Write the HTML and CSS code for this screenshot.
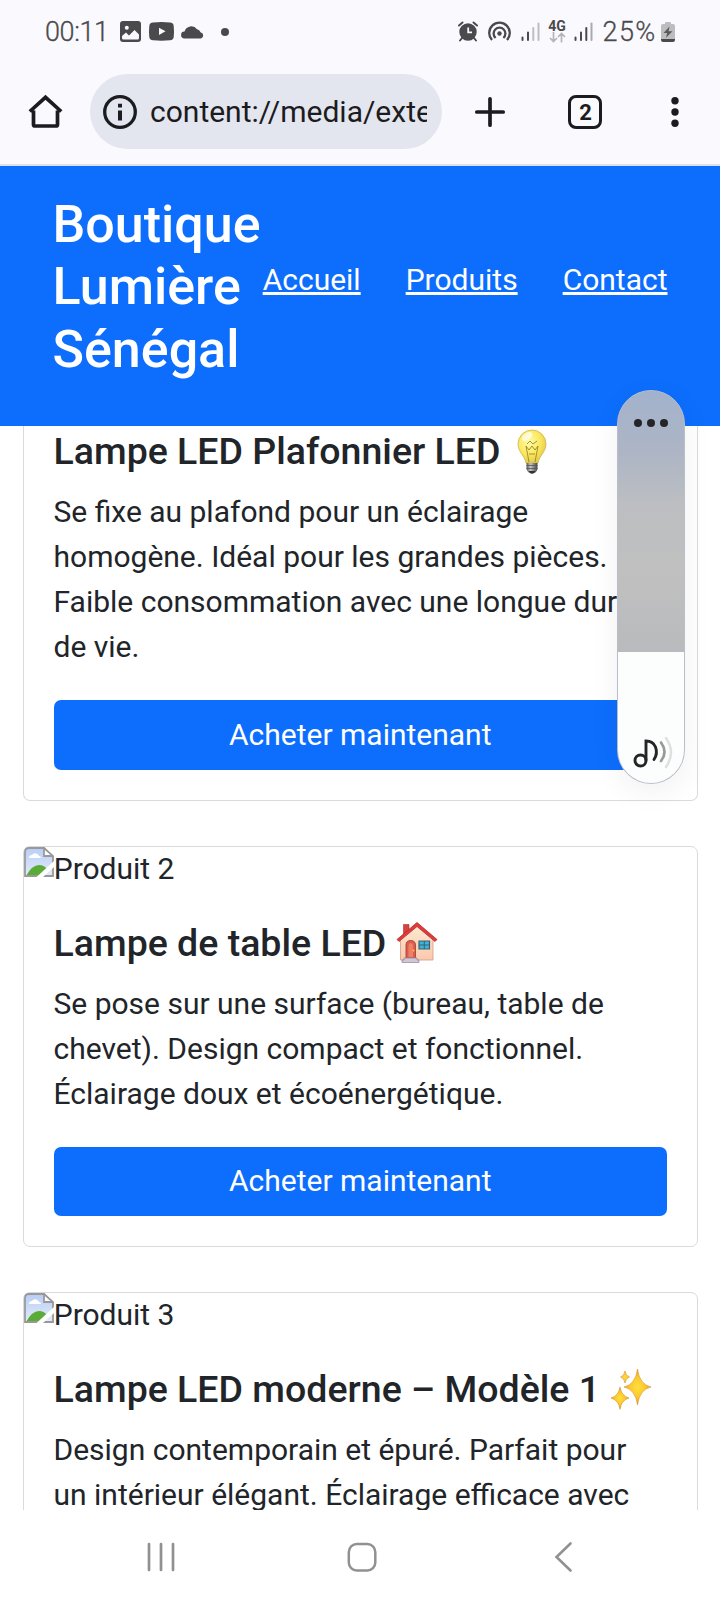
FILE: index.html
```html
<!DOCTYPE html>
<html lang="fr">
<head>
<meta charset="utf-8">
<title>Boutique Lumière Sénégal</title>
<link rel="stylesheet" href="styles.css">
</head>
<body>
<svg width="0" height="0" class="defs">
  <defs>
    <radialGradient id="glass" cx=".4" cy=".35" r=".65"><stop offset="0" stop-color="#fffba8"/><stop offset=".6" stop-color="#fbe860"/><stop offset="1" stop-color="#e6cb4a"/></radialGradient>
    <linearGradient id="metal"><stop offset="0" stop-color="#555"/><stop offset=".35" stop-color="#c4c4c4"/><stop offset="1" stop-color="#444"/></linearGradient>
    <linearGradient id="wall" x2="0" y2="1"><stop offset="0" stop-color="#fdebd2"/><stop offset="1" stop-color="#fbc8ae"/></linearGradient>
    <radialGradient id="gold"><stop offset="0" stop-color="#ffe03d"/><stop offset=".6" stop-color="#fbc62b"/><stop offset="1" stop-color="#dd9424"/></radialGradient>
    <linearGradient id="sky" x2="0" y2="1"><stop offset="0" stop-color="#b9cdf5"/><stop offset="1" stop-color="#e3ebfb"/></linearGradient>
    <symbol id="broken" viewBox="0 0 30 30">
      <path d="M1 29V5Q1 1 5 1H20L29 10V29Z" fill="url(#sky)"/>
      <path d="M5 11a3 3 0 0 1 3-3 4 4 0 0 1 7 1q2 0 2 2Z" fill="#fff"/>
      <path d="M2 29Q8 18 15 18 20 18 23 22L16 29Z" fill="#5bab38"/>
      <path d="M1 29V5Q1 1 5 1H20L29 10V29Z" fill="none" stroke="#999" stroke-width="1.8"/>
      <path d="M20 1V9H29Z" fill="#fff" stroke="#999" stroke-width="1.8"/>
      <path d="M12.500 30 30 14V20L19 30Z" fill="#fff"/>
    </symbol>
  </defs>
</svg>
<div class="phone">
  <div class="status">
    <span class="time">00:11</span>
    <svg class="st-img" width="21" height="21" viewBox="0 0 21 21"><rect width="21" height="21" rx="3" fill="#4a4a4c"/><path d="M2 15 6 11.500 9 14.500 14.500 9 19 13.500V17q0 1.500-1.500 1.500h-14Q2 18.500 2 17Z" fill="#faf9fe"/><circle cx="6.800" cy="6.800" r="2" fill="#faf9fe"/></svg>
    <svg class="st-yt" width="25" height="19" viewBox="0 0 25 19"><path d="M4 .6Q12.500-.4 21 .6 24.500 1 24.700 4 25.300 9.500 24.700 15 24.500 18 21 18.300 12.500 19.200 4 18.300.5 18 .3 15-.3 9.500.3 4 .5 1 4 .6Z" fill="#4a4a4c"/><path d="M10 5.700V13L16.500 9.300Z" fill="#faf9fe"/></svg>
    <svg class="st-cloud" width="23" height="14" viewBox="0 0 23 14"><path d="M3.500 13.500A3.300 3.300 0 0 1 3.500 6.600 7 7 0 0 1 16 4.300 4.500 4.500 0 0 1 19.500 7.300 3.200 3.200 0 0 1 20 13.500Z" fill="#4a4a4c"/></svg>
    <i class="st-dot"></i>
    <svg class="st-alarm" width="20" height="21" viewBox="0 0 20 21"><circle cx="10" cy="11" r="8.700" fill="#4a4a4c"/><g stroke="#4a4a4c" stroke-width="2" fill="none" stroke-linecap="round"><path d="M1 4.500 4.500 1.500M19 4.500 15.500 1.500M4 17 2 19.500M16 17 18 19.500"/></g><path d="M10.200 6.500V11.300H14" fill="none" stroke="#faf9fe" stroke-width="1.800"/></svg>
    <svg class="st-spot" width="23" height="21" viewBox="0 0 23 21"><g fill="none" stroke="#4a4a4c" stroke-width="2.300"><path d="M4 19A10.300 10.300 0 1 1 19 19"/><path d="M7.600 17A5.900 5.900 0 1 1 15.400 17"/></g><circle cx="11.500" cy="12.500" r="2.200" fill="#4a4a4c"/></svg>
    <svg class="st-sig" width="19" height="20" viewBox="0 0 19 20"><g stroke-width="2" stroke-linecap="round"><path d="M1.500 15.500V18M7 10.500V18" stroke="#4a4a4c"/><path d="M12.300 6V18M17.500 1.500V18" stroke="#bebec1"/></g></svg>
    <span class="net"><b>4G</b><svg width="17" height="11" viewBox="0 0 17 11"><path d="M4.500 0V9M1 6 4.500 9.500 8 6M12.500 10.500V1.500M9 5 12.500 1.500 16 5" fill="none" stroke="#b5b5b8" stroke-width="1.700"/></svg></span>
    <svg class="st-sig2" width="19" height="20" viewBox="0 0 19 20"><g stroke-width="2" stroke-linecap="round"><path d="M1.500 15.500V18M7 10.500V18M12.300 6V18" stroke="#4a4a4c"/><path d="M17.500 1.500V18" stroke="#aaaaad"/></g></svg>
    <span class="pct">25%</span>
    <svg class="st-bat" width="14" height="20" viewBox="0 0 14 20"><path d="M2 2H4V1Q4 0 5 0H9Q10 0 10 1V2H12Q14 2 14 4V17H0V4Q0 2 2 2Z" fill="#bdbdc0"/><path d="M0 17H14V18Q14 20 12 20H2Q0 20 0 18Z" fill="#4a4a4c"/><path d="M8.500 4.500 2.500 11H6.200L5 15.800 11.500 9.200H7.600Z" fill="#5b5b5d"/></svg>
  </div>

  <div class="toolbar">
    <svg class="tb-home" width="36" height="36" viewBox="0 0 36 36"><path d="M6.500 16.500V30.500Q6.500 32 8 32H29Q30.500 32 30.500 30.500V16.500M2.800 17.500 18.500 3.300 34.200 17.500" fill="none" stroke="#1c1b20" stroke-width="3.700"/></svg>
    <div class="omnibox">
      <svg width="34" height="34" viewBox="0 0 34 34"><circle cx="17" cy="17" r="15.300" fill="none" stroke="#1c1b20" stroke-width="3.300"/><path d="M17 8.700V12.500M17 15.500V25.500" stroke="#1c1b20" stroke-width="4"/></svg>
      <span class="url">content://media/exte</span>
    </div>
    <svg class="tb-plus" width="30" height="30" viewBox="0 0 30 30"><path d="M15 1.800V28.200M1.800 15H28.200" stroke="#1c1b20" stroke-width="3.700" stroke-linecap="round"/></svg>
    <span class="tabs">2</span>
    <svg class="tb-more" width="8" height="32" viewBox="0 0 8 32" fill="#1c1b20"><circle cx="4" cy="4.800" r="3.700"/><circle cx="4" cy="16" r="3.700"/><circle cx="4" cy="27.200" r="3.700"/></svg>
  </div>

  <header class="site-header">
    <h1>Boutique Lumière Sénégal</h1>
    <nav><a href="#">Accueil</a><a href="#">Produits</a><a href="#">Contact</a></nav>
  </header>

  <main class="products">
    <article class="card card-cut">
      <div class="card-body">
        <h5>Lampe LED Plafonnier LED <svg class="bulb" width="30" height="45" viewBox="0 0 30 45"><path d="M15 1A14 14 0 0 0 1 15C1 23 8 27 9 34H21C22 27 29 23 29 15A14 14 0 0 0 15 1Z" fill="url(#glass)" stroke="#cdb54b" stroke-width=".8"/><ellipse cx="10" cy="7.500" rx="6" ry="3.500" fill="#fff" opacity=".65" transform="rotate(-35 10 7.500)"/><path d="M12 33 9 17 12 21 15 17 18 21 21 17 18 33M10 15 13 12 16 15 20 12M12 25H18" fill="none" stroke="#8d7922" stroke-width=".8"/><path d="M9.500 34H20.500V40Q19 44.500 15 44.500T9.500 40Z" fill="url(#metal)"/><path d="M9.500 36.500H20.500M9.500 39.500H20.500" stroke="#555" stroke-width=".8"/><path d="M11.500 42H18.500Q17.500 44.800 15 44.800T11.500 42Z" fill="#333"/></svg></h5>
        <p>Se fixe au plafond pour un éclairage<br>homogène. Idéal pour les grandes pièces.<br>Faible consommation avec une longue durée<br>de vie.</p>
        <a class="btn" href="#">Acheter maintenant</a>
      </div>
    </article>

    <article class="card">
      <div class="card-img"><svg width="30" height="30"><use href="#broken"/></svg><span>Produit 2</span></div>
      <div class="card-body">
        <h5>Lampe de table LED <svg class="house" width="42" height="42" viewBox="0 0 42 42"><path d="M7.500 3.500H13V13H7.500Z" fill="#d8423f" stroke="#a9302f" stroke-width=".6"/><path d="M4.500 17.500 21 3.500 37 17.500V39H4.500Z" fill="url(#wall)" stroke="#d39a80" stroke-width=".8"/><path d="M1 18.500 21 1.500 41 18.500 39 20.500 21 5.500 3 20.500Z" fill="#df3b3b" stroke="#b52c30" stroke-width=".8"/><path d="M10 37.500V24Q10 19.500 14.700 19.500T19.500 24V37.500Z" fill="#dd5c4b" stroke="#a84535" stroke-width=".9"/><path d="M12.500 36V24.500Q12.500 22 14.700 22T17 24.500V36Z" fill="#ed8168"/><circle cx="17.500" cy="29.500" r="1" fill="#f7c63b"/><path d="M23 20H33.500V28H23Z" fill="#3db4dc" stroke="#3b6070" stroke-width="1.200"/><path d="M28.300 20V28M23 24H33.500" stroke="#3b6070"/><path d="M8 37H21V39H23V41.500H6V39H8Z" fill="#cfc7d8" stroke="#8e869b" stroke-width=".7"/></svg></h5>
        <p>Se pose sur une surface (bureau, table de<br>chevet). Design compact et fonctionnel.<br>Éclairage doux et écoénergétique.</p>
        <a class="btn" href="#">Acheter maintenant</a>
      </div>
    </article>

    <article class="card">
      <div class="card-img"><svg width="30" height="30"><use href="#broken"/></svg><span>Produit 3</span></div>
      <div class="card-body">
        <h5>Lampe LED moderne – Modèle 1 <svg class="sparkles" width="42" height="42" viewBox="0 0 42 42"><g fill="url(#gold)" stroke="#d5922c" stroke-width=".6"><path d="M27.500 1Q29.500 16.500 41 19 29.500 21.500 27.500 37 25.500 21.500 14 19 25.500 16.500 27.500 1Z"/><path d="M10 19Q11.500 28 19 30 11.500 32 10 41.300 8.500 32 1 30 8.500 28 10 19Z"/><path d="M15 3Q15.800 8 19.500 9 15.800 10 15 15 14.200 10 10.500 9 14.200 8 15 3Z"/></g></svg></h5>
        <p>Design contemporain et épuré. Parfait pour<br>un intérieur élégant. Éclairage efficace avec</p>
      </div>
    </article>
  </main>

  <div class="sysnav">
    <svg width="30" height="32" viewBox="0 0 30 32"><path d="M3 3V29M15 3V29M27 3V29" stroke="#919191" stroke-width="2.700" stroke-linecap="round"/></svg>
    <svg class="nav-home" width="32" height="32" viewBox="0 0 32 32"><rect x="2.800" y="3" width="26.500" height="26.500" rx="8" fill="none" stroke="#919191" stroke-width="2.500"/></svg>
    <svg class="nav-back" width="20" height="32" viewBox="0 0 20 32"><path d="M16.500 2.500 2.500 16 16.500 29.500" fill="none" stroke="#919191" stroke-width="2.600" stroke-linecap="round"/></svg>
  </div>

  <div class="volume">
    <svg class="vol-more" width="34" height="8" viewBox="0 0 34 8" fill="#252528"><circle cx="4" cy="4" r="4"/><circle cx="17" cy="4" r="4"/><circle cx="30" cy="4" r="4"/></svg>
    <div class="level">
      <svg width="40" height="34" viewBox="0 0 40 34" fill="none" stroke-linecap="round"><g stroke="#252528" stroke-width="2.900"><circle cx="7.500" cy="22.500" r="5.500"/><path d="M13 22V3Q20 3 22.500 9 25 15.500 21 21.500"/></g><path d="M28 4.500Q35 14 28 23" stroke="#999" stroke-width="2.700"/><path d="M33 0Q43 14.500 33 29" stroke="#e0e0e0" stroke-width="2.500"/></svg>
    </div>
  </div>
</div>
</body>
</html>
```
FILE: styles.css
```css
* { box-sizing: border-box; }

body {
  margin: 0;
  background: #fff;
  color: #212529;
  font-family: Roboto, "Noto Sans", sans-serif;
  font-size: 30px;
  line-height: 45px;
}

svg { display: block; flex: none; overflow: visible; }
.defs { position: absolute; }

.phone {
  position: relative;
  width: 720px;
  height: 1600px;
  overflow: hidden;
  display: flex;
  flex-direction: column;
}

/* Status bar */
.status {
  flex: none;
  height: 62px;
  padding-top: 1px;
  padding-left: 45px;
  display: flex;
  align-items: center;
  background: #faf9fe;
  color: #4a4a4c;
}
.time, .pct { flex: none; white-space: nowrap; font-size: 27px; font-weight: 300; line-height: 32px; -webkit-text-stroke: .3px #4a4a4c; }
.time { width: 75px; letter-spacing: -.4px; }
.st-yt { margin-left: 8px; }
.st-cloud { margin-left: 7px; }
.st-dot { width: 8px; height: 8px; border-radius: 50%; background: #4a4a4c; margin-left: 17px; }
.st-alarm { margin-left: 229px; }
.st-spot { margin-left: 9.5px; }
.st-sig { margin-left: 10.5px; }
.net { width: 18px; margin-left: 8px; display: flex; flex-direction: column; align-items: center; }
.net b { font-size: 14px; line-height: 12px; font-weight: 700; }
.st-sig2 { margin-left: 8px; }
.pct { width: 58px; margin-left: 9.5px; letter-spacing: 1.4px; }
.st-bat { margin-left: .5px; }

/* Browser toolbar */
.toolbar {
  flex: none;
  height: 104px;
  padding: 12px 0 15px 27px;
  display: flex;
  align-items: center;
  background: #faf9fe;
  border-bottom: 2px solid #dbe2ee;
}
.omnibox {
  width: 352px;
  height: 75px;
  margin-left: 27px;
  padding-left: 12.5px;
  border-radius: 38px;
  background: #e3e6ef;
  display: flex;
  align-items: center;
}
.url {
  width: 277px;
  margin-left: 13.5px;
  overflow: hidden;
  white-space: nowrap;
  color: #1c1b20;
}
.tb-plus { margin-left: 33.3px; }
.tabs {
  width: 34px;
  height: 34px;
  margin-left: 63.2px;
  border: 3.5px solid #1c1b20;
  border-radius: 8px;
  color: #1c1b20;
  font-size: 22px;
  font-weight: 700;
  line-height: 29px;
  text-align: center;
}
.tb-more { margin-left: 69px; }

/* Shop header */
.site-header {
  flex: none;
  height: 260px;
  padding: 28px 52.5px 30px;
  display: flex;
  justify-content: space-between;
  background: #0d6efd;
  color: #fff;
}
.site-header h1 { width: 210px; margin: 0; font-size: 52px; font-weight: 500; line-height: 62.4px; }
.site-header nav { display: flex; gap: 45px; padding-top: 63px; }
.site-header a { color: #fff; text-decoration: underline; text-decoration-skip-ink: none; }

/* Product list */
.products {
  flex: none;
  height: 1084px;
  padding: 0 22px 0 23px;
  overflow: hidden;
  display: flex;
  flex-direction: column;
  gap: 45px;
}
.card { flex: none; border: 1px solid #d9dadb; border-radius: 7px; }
.card-cut { border-top: 0; border-radius: 0 0 7px 7px; }
.card-cut .card-body { padding-top: 3px; }
.card-cut .btn { line-height: 70px; }
.card-img { height: 45px; display: flex; }
.card-img span { margin: -1px 0 0 -.3px; }
.card-body { padding: 29px 30.5px 30px 30px; }
.card h5 {
  height: 45px;
  margin: 0 0 15px -.5px;
  font-size: 37.5px;
  font-weight: 500;
  line-height: 45px;
  display: flex;
  white-space: pre;
}
.card p { margin: 0 0 31px -.5px; white-space: nowrap; }
.bulb { margin: -.5px 0 0 7px; }
.house { margin: .5px 0 0 .5px; }
.sparkles { margin: 1px 0 0 1px; }
.btn {
  display: block;
  height: 69.5px;
  border-radius: 7px;
  background: #0d6efd;
  color: #fff;
  line-height: 68.4px;
  text-align: center;
  text-decoration: none;
}

/* Android navigation */
.sysnav {
  flex: none;
  height: 90px;
  padding: 4px 0 0 145.5px;
  display: flex;
  align-items: center;
  background: #fff;
}
.nav-home { margin-left: 170px; }
.nav-back { margin-left: 176.5px; }

/* Floating volume slider */
.volume {
  position: absolute;
  left: 617px;
  top: 390px;
  width: 68px;
  height: 394px;
  border: 1px solid #b9bec9;
  border-radius: 34px;
  overflow: hidden;
  display: flex;
  flex-direction: column;
  justify-content: space-between;
  align-items: center;
  padding-top: 28px;
  background: linear-gradient(#a2b2cc 0, #adb5c5 60px, #bcbec1 115px, #c0c0c0 180px, #b9babd 262px);
  box-shadow: 0 8px 30px rgba(0, 0, 0, .06);
}
.level { width: 66px; height: 131px; padding: 86px 0 0 15px; background: #fcfefe; }
```
